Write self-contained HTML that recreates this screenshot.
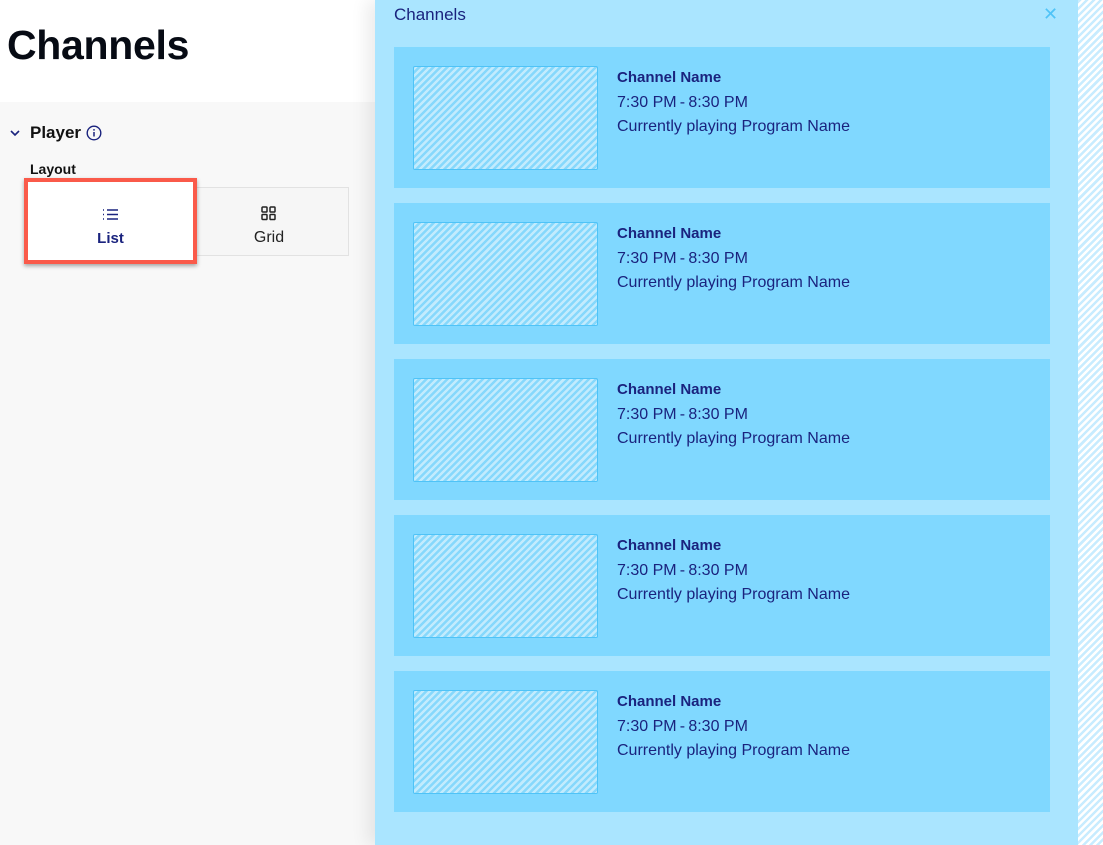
<!DOCTYPE html>
<html><head><meta charset="utf-8"><style>
*{margin:0;padding:0;box-sizing:border-box}
body{width:1103px;height:845px;overflow:hidden;background:#f8f8f8;font-family:"Liberation Sans",sans-serif;position:relative}
.hdr{position:absolute;left:0;top:0;width:375px;height:102px;background:#fff}
.hdr h1{position:absolute;left:7px;top:22px;font-size:41px;font-weight:700;color:#070b14;letter-spacing:-0.3px}
.sec{position:absolute;left:9px;top:123px;font-size:17px;font-weight:700;color:#111;display:flex;align-items:center}
.lay{position:absolute;left:30px;top:161px;font-size:14px;font-weight:700;color:#111}
.seg{position:absolute;left:29px;top:187px;width:320px;height:69px;border:1px solid #e2e2e2;background:#f6f6f6}
.opt{position:absolute;top:0;height:67px;width:160px;text-align:center;font-size:15px}
.sel{position:absolute;left:24px;top:178px;width:173px;height:86px;border:4px solid #fa5a4a;box-shadow:0 2px 4px rgba(0,0,0,.35);background:#fff}
.panel{position:absolute;left:375px;top:0;width:703px;height:845px;background:#aae5ff;box-shadow:-8px 0 16px rgba(0,0,0,.08)}
.stripe{position:absolute;left:1078px;top:0;width:25px;height:845px;background:repeating-linear-gradient(135deg,#c8ecff 0 2.5px,#fff 2.5px 5px)}
.ptitle{position:absolute;left:19px;top:5px;font-size:17px;color:#1a237e}
.close{position:absolute;left:668px;top:4px;color:#4fc3f7;font-size:18px}
.card{position:absolute;left:19px;width:656px;height:141px;background:#80d8ff}
.img{position:absolute;left:19px;top:19px;width:185px;height:104px;border:1px solid #4fc3f7;border-radius:2px;background:repeating-linear-gradient(135deg,#c2ebfd 0 2.5px,#86d8fc 2.5px 5px)}
.txt{position:absolute;left:223px;top:19px;color:#1a237e;font-size:16px;line-height:24.5px}
.txt b{display:block;font-size:15px}
</style></head><body>
<div class="hdr"><h1>Channels</h1></div>
<div class="sec"><svg width="12" height="10" viewBox="0 0 12 10"><path d="M2 3l4 4 4-4" fill="none" stroke="#1a237e" stroke-width="1.6"/></svg><span style="margin-left:9px">Player</span>
<svg style="margin-left:5px" width="16" height="16" viewBox="0 0 16 16"><circle cx="8" cy="8" r="6.8" fill="none" stroke="#1a237e" stroke-width="1.4"/><circle cx="8" cy="4.9" r="0.9" fill="#1a237e"/><path d="M8 7v4.5" stroke="#1a237e" stroke-width="1.5"/></svg></div>
<div class="lay">Layout</div>
<div class="seg"><div class="opt" style="left:160px"><svg style="position:absolute;left:71px;top:18px" width="16" height="15" viewBox="0 0 16 15"><g fill="none" stroke="#222" stroke-width="1.5"><rect x="1" y="1" width="5" height="5" rx="0.8"/><rect x="9" y="1" width="5" height="5" rx="0.8"/><rect x="1" y="8.5" width="5" height="5" rx="0.8"/><rect x="9" y="8.5" width="5" height="5" rx="0.8"/></g></svg><div style="position:absolute;top:41px;width:160px;color:#222;left:-1px;font-size:16px">Grid</div></div></div>
<div class="sel"><svg style="position:absolute;left:74px;top:26px" width="17" height="13" viewBox="0 0 17 13"><g stroke="#1a237e" stroke-width="1.4"><path d="M1 2h1M1 6.5h1M1 11h1M5 2h11M5 6.5h11M5 11h11"/></g></svg><div style="position:absolute;top:48px;width:165px;text-align:center;font-weight:700;color:#1a237e;font-size:15px">List</div></div>
<div class="panel">
<div class="ptitle">Channels</div><div class="close">✕</div>
<div class="card" style="top:47px"><div class="img"></div><div class="txt"><b>Channel Name</b>7:30 PM&thinsp;-&thinsp;8:30 PM<br>Currently playing Program Name</div></div>
<div class="card" style="top:203px"><div class="img"></div><div class="txt"><b>Channel Name</b>7:30 PM&thinsp;-&thinsp;8:30 PM<br>Currently playing Program Name</div></div>
<div class="card" style="top:359px"><div class="img"></div><div class="txt"><b>Channel Name</b>7:30 PM&thinsp;-&thinsp;8:30 PM<br>Currently playing Program Name</div></div>
<div class="card" style="top:515px"><div class="img"></div><div class="txt"><b>Channel Name</b>7:30 PM&thinsp;-&thinsp;8:30 PM<br>Currently playing Program Name</div></div>
<div class="card" style="top:671px"><div class="img"></div><div class="txt"><b>Channel Name</b>7:30 PM&thinsp;-&thinsp;8:30 PM<br>Currently playing Program Name</div></div>
</div>
<div class="stripe"></div>
</body></html>
